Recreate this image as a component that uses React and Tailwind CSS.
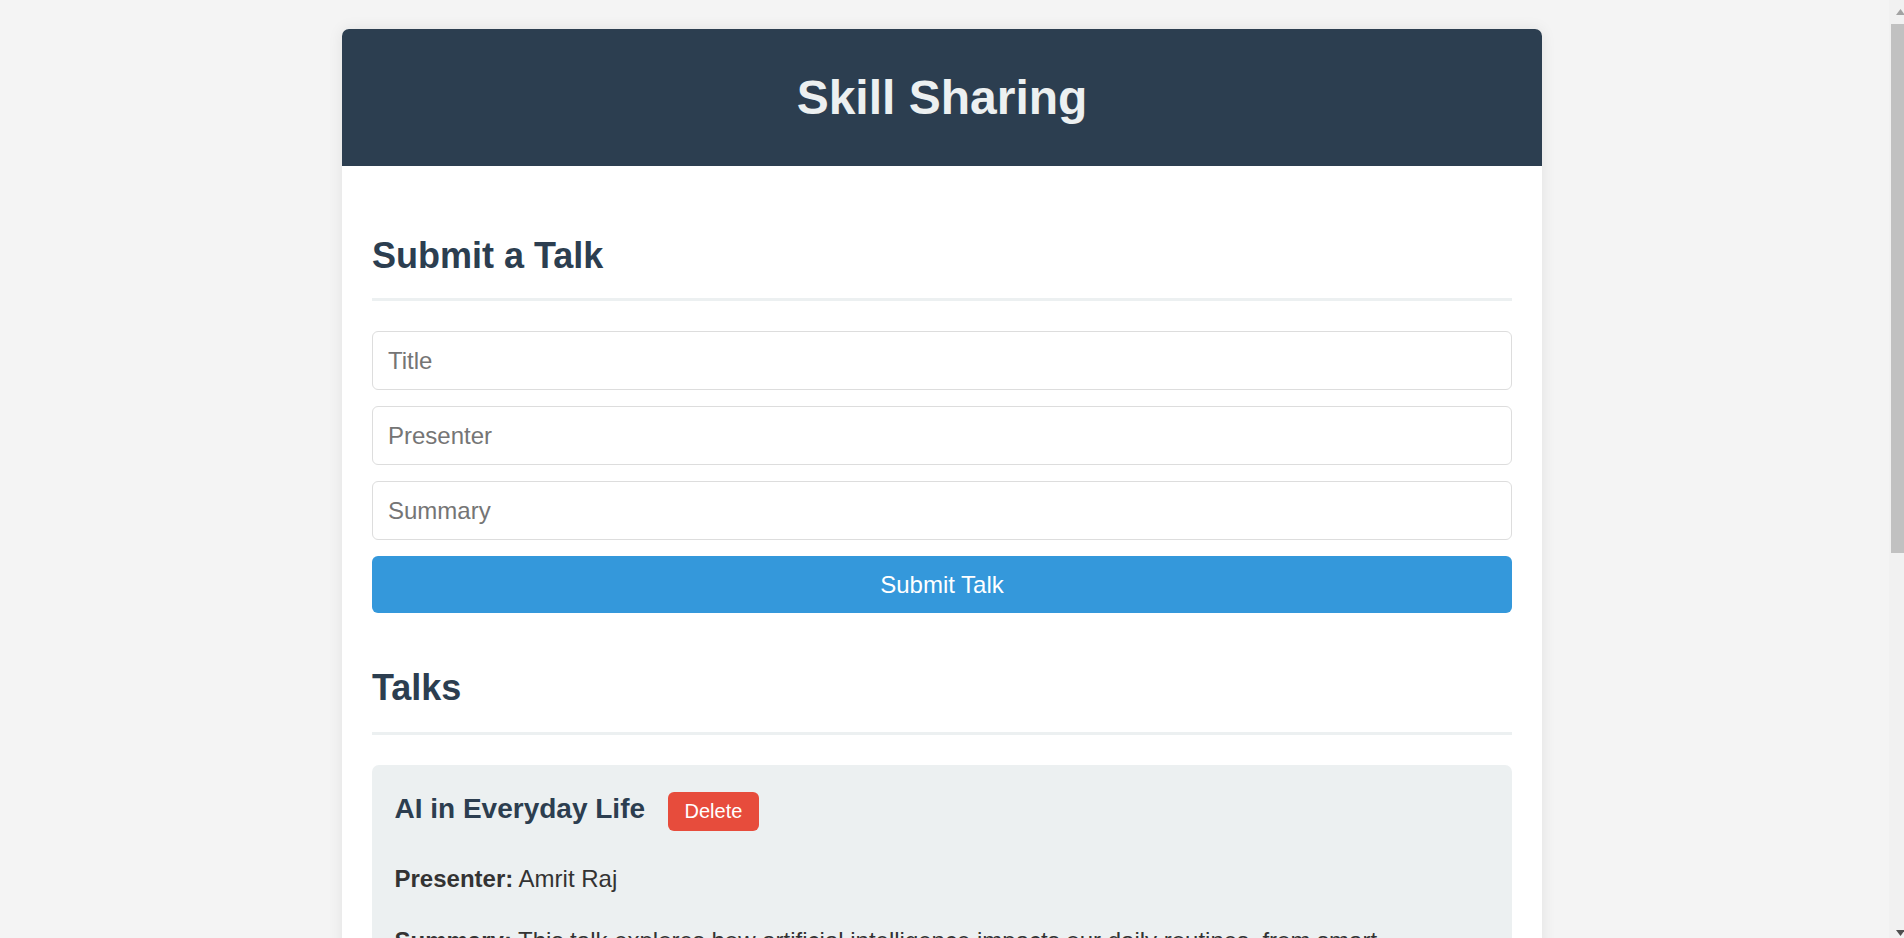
import React from 'react';

const talks = [
  {
    title: 'AI in Everyday Life',
    presenter: 'Amrit Raj',
    summary:
      'This talk explores how artificial intelligence impacts our daily routines, from smart automation at home to personalized recommendations on the apps we use every day.',
  },
];

const Scrollbar = () => (
  <div className="w-[20px] shrink-0 flex justify-end">
    <div className="w-[15px] h-full bg-[#f1f1f1] relative">
      {/* up arrow */}
      <svg className="absolute left-[7px] top-[9px]" width="9" height="6" viewBox="0 0 9 6">
        <polygon points="4.5,0 9,6 0,6" fill="#a3a3a3" />
      </svg>
      {/* thumb */}
      <div className="absolute left-[2px] right-0 top-[24px] h-[529px] bg-[#c1c1c1]" />
      {/* down arrow */}
      <svg className="absolute left-[7px] bottom-[2px]" width="9" height="6" viewBox="0 0 9 6">
        <polygon points="0,0 9,0 4.5,6" fill="#505050" />
      </svg>
    </div>
  </div>
);

const App = () => {
  return (
    <div className="flex h-screen overflow-hidden bg-[#f4f4f4] font-['Liberation_Sans',Arial,sans-serif] text-[#333]">
      <div className="flex-1 pt-[29px]">
        <div className="mx-auto w-[1200px] bg-white rounded-[7px] shadow-[0_0_15px_rgba(0,0,0,0.08)]">
          {/* Header */}
          <header className="h-[137px] bg-[#2c3e50] rounded-t-[7px] flex items-center justify-center">
            <h1 className="text-[48px] leading-[55px] font-bold text-[#ecf0f1]">Skill Sharing</h1>
          </header>

          <main className="px-[30px] pt-[69px] pb-[30px]">
            {/* Submit form */}
            <h2 className="text-[36px] leading-[41px] font-bold text-[#2c3e50] pb-[22px] border-b-[3px] border-[#ecf0f1]">
              Submit a Talk
            </h2>
            <form className="mt-[30px] flex flex-col gap-[16px]" onSubmit={(e) => e.preventDefault()}>
              <input
                type="text"
                placeholder="Title"
                className="h-[59px] w-full px-[15px] text-[24px] border border-[#ddd] rounded-[6px] outline-none placeholder:text-[#757575]"
              />
              <input
                type="text"
                placeholder="Presenter"
                className="h-[59px] w-full px-[15px] text-[24px] border border-[#ddd] rounded-[6px] outline-none placeholder:text-[#757575]"
              />
              <input
                type="text"
                placeholder="Summary"
                className="h-[59px] w-full px-[15px] text-[24px] border border-[#ddd] rounded-[6px] outline-none placeholder:text-[#757575]"
              />
              <button
                type="submit"
                className="h-[57px] w-full bg-[#3498db] text-white text-[24px] rounded-[6px]"
              >
                Submit Talk
              </button>
            </form>

            {/* Talks list */}
            <h2 className="mt-[54px] text-[36px] leading-[41px] font-bold text-[#2c3e50] pb-[24px] border-b-[3px] border-[#ecf0f1]">
              Talks
            </h2>
            <div className="mt-[30px] flex flex-col gap-[22px]">
              {talks.map((talk) => (
                <div key={talk.title} className="bg-[#ecf0f1] rounded-[7px] px-[22.5px] pt-[27px] pb-[22px]">
                  <div className="flex items-baseline">
                    <h3 className="text-[28px] leading-[32px] font-bold text-[#2c3e50]">{talk.title}</h3>
                    <button className="ml-[23px] bg-[#e74c3c] text-white text-[20px] leading-[23px] px-[16.5px] py-[8px] rounded-[6px]">
                      Delete
                    </button>
                  </div>
                  <p className="mt-[29px] text-[24px] leading-[38.4px]">
                    <strong>Presenter:</strong> {talk.presenter}
                  </p>
                  <p className="mt-[24px] text-[24px] leading-[38.4px]">
                    <strong>Summary:</strong> {talk.summary}
                  </p>
                </div>
              ))}
            </div>
          </main>
        </div>
      </div>
      <Scrollbar />
    </div>
  );
};

export default App;
